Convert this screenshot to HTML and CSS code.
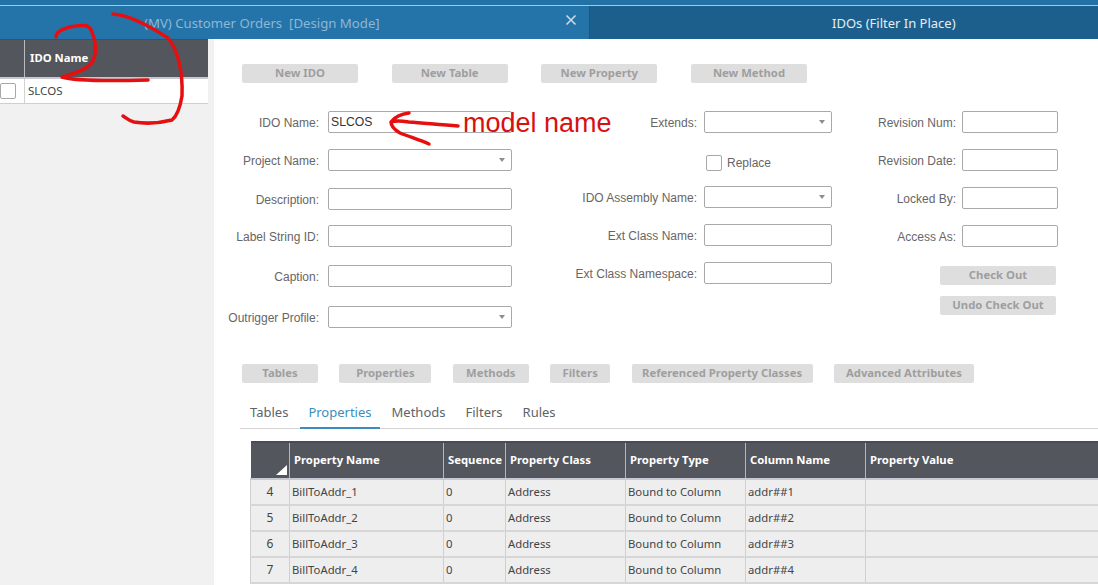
FILE: index.html
```html
<!DOCTYPE html>
<html lang="en">
<head>
<meta charset="utf-8">
<title>IDOs (Filter In Place)</title>
<link rel="stylesheet" href="styles.css">
</head>
<body>
<div class="page">
  <div class="topline"></div>
  <div class="tabbar">
    <div class="tab tab-active">
      <span class="tab-title">(MV) Customer Orders&nbsp; [Design Mode]</span>
      <svg class="tab-close" width="12" height="12" viewBox="0 0 12 12"><path d="M1.5 1.5l9 9M10.5 1.5l-9 9" stroke="#c9dbe8" stroke-width="1.6" fill="none"/></svg>
    </div>
    <div class="tab tab-other"><span class="tab-title">IDOs (Filter In Place)</span></div>
  </div>
  <div class="main">
    <aside class="side">
      <div class="side-head">
        <div class="side-sel"></div>
        <div class="side-name">IDO Name</div>
      </div>
      <div class="side-row">
        <div class="side-check"><span class="check check-side"></span></div>
        <div class="side-value">SLCOS</div>
      </div>
    </aside>
    <section class="content">
      <div class="btnrow btnrow-top">
        <button class="btn btn-wide">New IDO</button>
        <button class="btn btn-wide">New Table</button>
        <button class="btn btn-wide">New Property</button>
        <button class="btn btn-wide">New Method</button>
      </div>
      <div class="form">
        <div class="fcol fcol-left">
          <label class="lbl">IDO Name:</label><div class="inp inp-val">SLCOS</div>
          <label class="lbl">Project Name:</label><div class="inp inp-sel"></div>
          <label class="lbl">Description:</label><div class="inp"></div>
          <label class="lbl">Label String ID:</label><div class="inp"></div>
          <label class="lbl">Caption:</label><div class="inp"></div>
          <label class="lbl">Outrigger Profile:</label><div class="inp inp-sel"></div>
        </div>
        <div class="fcol fcol-mid">
          <label class="lbl">Extends:</label><div class="inp inp-sel"></div>
          <span></span><div class="replace"><span class="check"></span><span class="lbl replace-text">Replace</span></div>
          <label class="lbl">IDO Assembly Name:</label><div class="inp inp-sel"></div>
          <label class="lbl">Ext Class Name:</label><div class="inp"></div>
          <label class="lbl">Ext Class Namespace:</label><div class="inp"></div>
        </div>
        <div class="fcol fcol-right">
          <label class="lbl">Revision Num:</label><div class="inp"></div>
          <label class="lbl">Revision Date:</label><div class="inp"></div>
          <label class="lbl">Locked By:</label><div class="inp"></div>
          <label class="lbl">Access As:</label><div class="inp"></div>
          <button class="btn btn-wide btn-span">Check Out</button>
          <button class="btn btn-wide btn-span">Undo Check Out</button>
        </div>
      </div>
      <div class="btnrow btnrow-sub">
        <button class="btn b76">Tables</button>
        <button class="btn b92">Properties</button>
        <button class="btn b76">Methods</button>
        <button class="btn b60">Filters</button>
        <button class="btn b181">Referenced Property Classes</button>
        <button class="btn b140">Advanced Attributes</button>
      </div>
      <nav class="tabs">
        <span class="subtab">Tables</span>
        <span class="subtab subtab-on">Properties</span>
        <span class="subtab">Methods</span>
        <span class="subtab">Filters</span>
        <span class="subtab">Rules</span>
      </nav>
      <table class="grid">
        <colgroup>
          <col class="c-num"><col class="c-name"><col class="c-seq"><col class="c-mid"><col class="c-mid"><col class="c-mid"><col>
        </colgroup>
        <thead>
          <tr>
            <th class="corner"><span class="corner-mark"></span></th>
            <th>Property Name</th><th>Sequence</th><th>Property Class</th><th>Property Type</th><th>Column Name</th><th>Property Value</th>
          </tr>
        </thead>
        <tbody>
          <tr><td class="num">4</td><td>BillToAddr_1</td><td>0</td><td>Address</td><td>Bound to Column</td><td>addr##1</td><td></td></tr>
          <tr><td class="num">5</td><td>BillToAddr_2</td><td>0</td><td>Address</td><td>Bound to Column</td><td>addr##2</td><td></td></tr>
          <tr><td class="num">6</td><td>BillToAddr_3</td><td>0</td><td>Address</td><td>Bound to Column</td><td>addr##3</td><td></td></tr>
          <tr><td class="num">7</td><td>BillToAddr_4</td><td>0</td><td>Address</td><td>Bound to Column</td><td>addr##4</td><td></td></tr>
        </tbody>
      </table>
    </section>
  </div>
  <svg class="ink" width="1098" height="585" viewBox="0 0 1098 585">
    <path d="M56 37C56 31 66 27 76 26C84 25 89 24 92 32C96 42 97 52 93 61C87 70 74 74 62 77C74 81 110 81 148 80"/>
    <path d="M113 14C128 15 148 25 168 38C178 50 183 72 182 96C180 108 177 116 172 120C160 123 146 124 134 122C129 121 126 118 123 116"/>
    <path d="M458 126C440 125 425 123 409 122C402 121 397 120 391 122C394 118 400 114 409 113M391 122C391 127 395 130 400 133C410 137 420 140 429 144"/>
  </svg>
  <div class="note">model name</div>
</div>
</body>
</html>
```
FILE: styles.css
```css
* { box-sizing: border-box; }
html, body { margin: 0; padding: 0; }
body { background: #fff; font-family: "Liberation Sans", Arial, sans-serif; }
.page { position: relative; width: 1098px; height: 585px; overflow: hidden; }

.topline { height: 6px; background: #2272a6; border-bottom: 1px solid #a9c6da; }
.tabbar { display: flex; height: 33px; }
.tab { display: flex; align-items: center; height: 100%; color: #c3d6e4; font-family: "Noto Sans", sans-serif; font-size: 13.2px; }
.tab-active { width: 590px; padding-left: 144px; background: #2574a9; color: #8fb6d2; position: relative; border-right: 1px solid #1a567f; }
.tab-close { position: absolute; left: 565px; top: 8px; }
.tab-other { flex: 1; padding-left: 242px; background: #1d5f8c; color: #e4edf3; font-size: 13px; }

.main { display: flex; height: 546px; }
.side { flex: none; width: 214px; background: #f1f1f1; }
.side-head { display: flex; width: 208px; height: 40px; background: #53565c; border-top: 1px solid #474c58; border-bottom: 2px solid #c6c9d0; }
.side-sel { width: 25px; border-right: 1px solid #b9bbbf; }
.side-name { padding: 10px 0 0 5px; color: #fff; font-family: "Noto Sans", sans-serif; font-size: 11.3px; font-weight: 700; }
.side-row { display: flex; width: 208px; height: 25px; background: #fff; border-bottom: 1px solid #cfcfcf; }
.side-check { width: 25px; border-right: 1px solid #d2d2d2; }
.side-value { padding: 4px 0 0 3px; color: #444; font-family: "Noto Sans", sans-serif; font-size: 11.5px; }
.check { display: block; width: 16px; height: 16px; background: #fff; border: 1px solid #a8a8a8; border-radius: 2px; }
.check-side { margin: 4px 0 0 0; }

.content { flex: 1; min-width: 0; background: #fff; }
.btnrow { display: flex; margin-left: 28px; }
.btnrow-top { gap: 33.67px; margin-top: 25px; }
.btnrow-sub { gap: 21.4px; margin-top: 36px; }
.btn { display: block; height: 19px; padding: 0 0 2px; border: 0; border-radius: 2px; background: #dedede; color: #9e9e9e; font-family: "Noto Sans", sans-serif; font-size: 11.3px; font-weight: 700; line-height: 15px; text-align: center; }
.btn-wide { width: 116px; }
.b76 { width: 76px; }
.b92 { width: 92px; }
.b60 { width: 60px; }
.b181 { width: 181px; }
.b140 { width: 140px; }

.form { display: flex; margin-top: 28px; height: 217px; }
.fcol { display: grid; flex: none; align-items: start; }
.fcol-left { width: 298px; grid-template-columns: 105px 184px; column-gap: 9px; grid-template-rows: 38px 39px 37px 40px 41px 22px; }
.fcol-mid { width: 320px; grid-template-columns: 185px 128px; column-gap: 7px; grid-template-rows: 38px 37px 38px 38px 22px; }
.fcol-right { width: 226px; grid-template-columns: 124px 96px; column-gap: 6px; grid-template-rows: 38px 38px 38px 41px 30px 19px; }
.lbl { padding-top: 1px; color: #666; font-size: 12px; line-height: 22px; text-align: right; white-space: nowrap; }
.inp { height: 22px; padding-left: 2px; background: #fff; border: 1px solid #a9a9a9; border-radius: 2px; color: #333; font-size: 12.2px; line-height: 20px; position: relative; }
.inp-sel::after { content: ""; position: absolute; right: 6px; top: 8px; border-left: 3px solid transparent; border-right: 3px solid transparent; border-top: 4px solid #8d8d8d; }
.replace { display: flex; align-items: center; gap: 5px; margin: 5px 0 0 2px; }
.replace-text { padding-top: 1px; line-height: 16px; }
.btn-span { grid-column: 1 / -1; justify-self: end; margin-right: 2px; }

.tabs { display: flex; gap: 4px; height: 28px; margin: 18px 0 0 26px; padding-left: 2px; border-bottom: 1px solid #d4d4d4; }
.subtab { height: 28px; padding: 1px 8px 0; color: #5d6368; font-family: "Noto Sans", sans-serif; font-size: 13px; line-height: 21px; border-bottom: 2px solid transparent; }
.subtab-on { color: #3c8dbc; border-bottom-color: #3c8dbc; }

.grid { width: 848px; margin: 12px 0 0 36px; border-collapse: collapse; table-layout: fixed; font-family: "Noto Sans", sans-serif; font-size: 11.3px; }
.c-num { width: 39px; }
.c-name { width: 154px; }
.c-seq { width: 62px; }
.c-mid { width: 120px; }
.grid th { height: 37px; padding: 0 4px 2px; background: #53565c; color: #fff; font-size: 11.3px; font-weight: 700; text-align: left; white-space: nowrap; border-left: 1px solid #b4b6ba; border-top: 2px solid #474c5c; border-bottom: 2px solid #c6c9d4; }
.grid th.corner { position: relative; border-left: 0; }
.corner-mark { position: absolute; right: 2px; bottom: 3px; width: 11px; height: 10px; background: #fff; clip-path: polygon(100% 0, 100% 100%, 0 100%); }
.grid td { height: 26px; padding: 0 2px 2px; background: #eee; color: #444; white-space: nowrap; border-left: 1px solid #cfcfcf; border-bottom: 2px solid #d6d6d6; }
.grid td.num { text-align: center; font-size: 12px; }

.ink { position: absolute; left: 0; top: 0; pointer-events: none; }
.ink path { fill: none; stroke: #e60f0f; stroke-width: 3.5; stroke-linecap: round; stroke-linejoin: round; }
.note { position: absolute; left: 463px; top: 106px; color: #d81010; font-size: 27px; line-height: 34px; white-space: nowrap; }
```
